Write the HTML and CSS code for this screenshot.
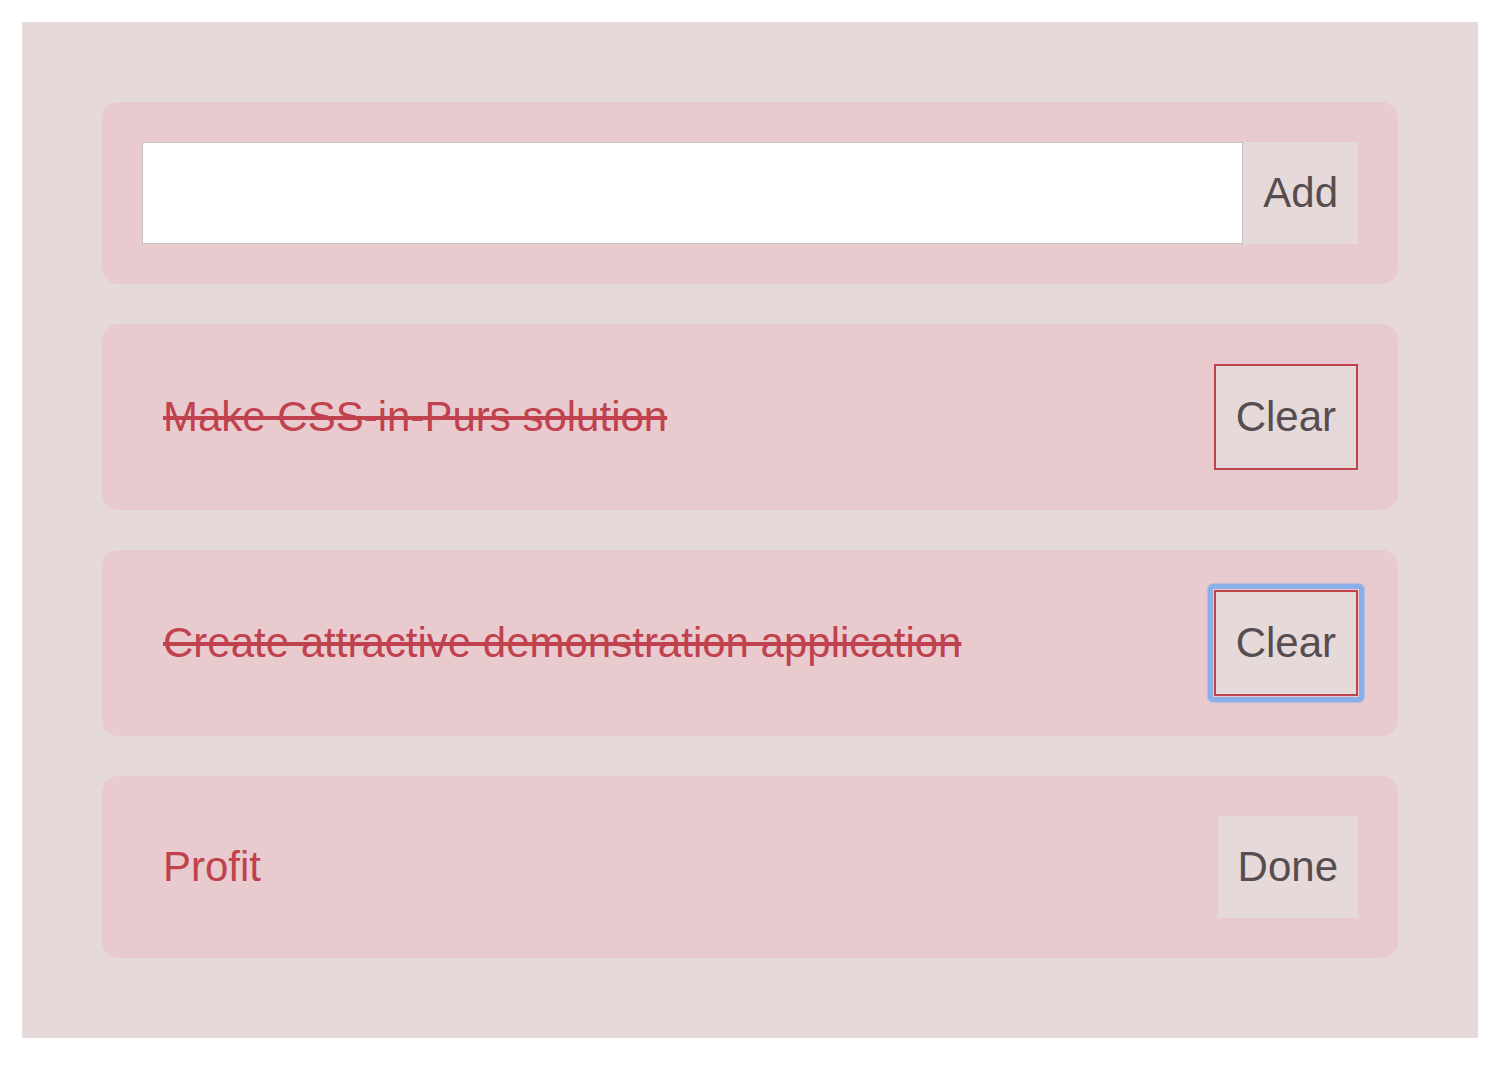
FILE: index.html
```html
<!DOCTYPE html>
<html>
<head>
<meta charset="utf-8">
<link rel="stylesheet" href="styles.css">
</head>
<body>
<div class="app">
  <div class="card card-form">
    <input class="entry" type="text">
    <button class="btn">Add</button>
  </div>
  <div class="card">
    <span class="item done">Make CSS-in-Purs solution</span>
    <button class="btn btn-clear">Clear</button>
  </div>
  <div class="card">
    <span class="item done">Create attractive demonstration application</span>
    <button class="btn btn-clear focused">Clear</button>
  </div>
  <div class="card card-plain">
    <span class="item">Profit</span>
    <button class="btn">Done</button>
  </div>
</div>
</body>
</html>
```
FILE: styles.css
```css
html, body {
  margin: 0;
  padding: 0;
  background: #ffffff;
}
body {
  font-family: "Liberation Sans", Arial, Helvetica, sans-serif;
}
.app {
  box-sizing: border-box;
  width: 1456px;
  margin: 22px 0 0 22px;
  padding: 80px;
  background: #e6d9da;
  display: flex;
  flex-direction: column;
  gap: 40.5px;
}
.card {
  background: #e9cbcf;
  border-radius: 16px;
  padding: 40px;
  display: flex;
  align-items: center;
  justify-content: space-between;
}
.entry {
  flex: 1;
  box-sizing: border-box;
  height: 101.5px;
  margin: 0;
  border: 1px solid #c2c2c2;
  background: #ffffff;
  font-family: inherit;
  font-size: 42px;
  outline: none;
}
.btn {
  position: relative;
  margin: 0;
  border: none;
  background: #e6d9da;
  color: #574d4e;
  font-family: "Liberation Sans", Arial, Helvetica, sans-serif;
  font-size: 42px;
  line-height: 49.5px;
  padding: 26px 20px;
  border-radius: 0;
}
.btn-clear {
  border: 2px solid #c0424e;
}
.focused::after {
  content: "";
  position: absolute;
  top: -8px;
  left: -8px;
  right: -8px;
  bottom: -8px;
  border: 5px solid #8aaee8;
  border-radius: 5px;
  box-shadow: 0 0 1px 1px rgba(138, 174, 232, 0.5);
}
.item {
  padding-left: 21px;
  color: #c0424e;
  font-size: 42px;
  line-height: 49.5px;
}
.done {
  text-decoration: line-through;
}
```
